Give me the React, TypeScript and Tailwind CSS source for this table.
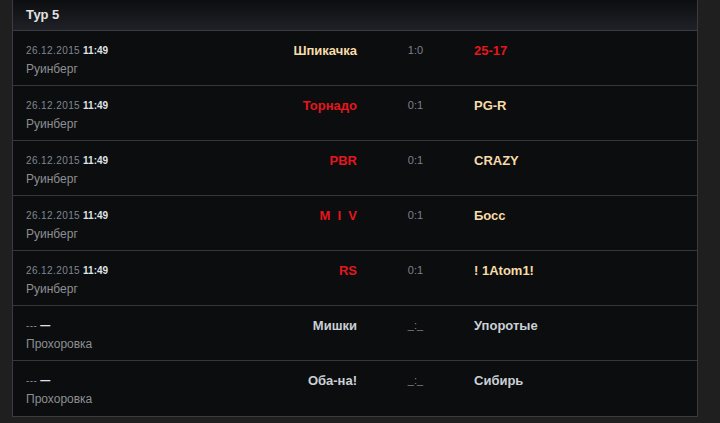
import React from "react";

type Match = {
  date: string;
  time: string;
  place: string;
  home: string;
  homeColor: string;
  score: string;
  away: string;
  awayColor: string;
};

const CREAM = "text-[#f6dca8]";
const RED = "text-[#e5161d]";
const PLAIN = "text-[#c9d0d6]";

const matches: Match[] = [
  { date: "26.12.2015", time: "11:49", place: "Руинберг", home: "Шпикачка", homeColor: CREAM, score: "1:0", away: "25-17", awayColor: RED },
  { date: "26.12.2015", time: "11:49", place: "Руинберг", home: "Торнадо", homeColor: RED, score: "0:1", away: "PG-R", awayColor: CREAM },
  { date: "26.12.2015", time: "11:49", place: "Руинберг", home: "PBR", homeColor: RED, score: "0:1", away: "CRAZY", awayColor: CREAM },
  { date: "26.12.2015", time: "11:49", place: "Руинберг", home: "M  I  V", homeColor: RED, score: "0:1", away: "Босс", awayColor: CREAM },
  { date: "26.12.2015", time: "11:49", place: "Руинберг", home: "RS", homeColor: RED, score: "0:1", away: "! 1Atom1!", awayColor: CREAM },
  { date: "---", time: "—", place: "Прохоровка", home: "Мишки", homeColor: PLAIN, score: "_:_", away: "Упоротые", awayColor: PLAIN },
  { date: "---", time: "—", place: "Прохоровка", home: "Оба-на!", homeColor: PLAIN, score: "_:_", away: "Сибирь", awayColor: PLAIN },
];

export default function App() {
  return (
    <div className="min-h-[423px] bg-[#1f1f20] pl-[12px] pb-[8px] font-['Liberation_Sans',Arial,sans-serif]">
      <div className="w-[686px] border-x border-b border-[#3b3c41] bg-[#0c0d0f]">
        {/* Header */}
        <div className="h-[31px] border-b border-[#393a3f] bg-gradient-to-b from-[#0d0e10] to-[#1f2127] pl-[13px] flex items-center">
          <span className="text-[13px] font-bold text-[#e2e2e2]">Тур 5</span>
        </div>

        {matches.map((m, i) => (
          <div
            key={i}
            className={`h-[55px] grid grid-cols-[200px_131px_117px_1fr] pl-[13px] pt-[12px] ${
              i < matches.length - 1 ? "border-b border-[#36373b]" : ""
            }`}
          >
            <div className="flex flex-col">
              <div className="h-[15px] flex items-center text-[10px] tracking-[0.4px] text-[#7f8791]">
                {m.date}
                <span className="ml-[3px] font-bold text-[#dfe2e6] tracking-normal">{m.time}</span>
              </div>
              <div className="mt-[4px] text-[12px] text-[#8d8f92] leading-[15px]">{m.place}</div>
            </div>
            <div className={`h-[15px] flex items-center justify-end text-[13px] font-bold whitespace-pre ${m.homeColor}`}>
              {m.home}
            </div>
            <div className="h-[15px] flex items-center justify-center text-[11px] text-[#7a828d]">
              {m.score}
            </div>
            <div className={`h-[15px] flex items-center text-[13px] font-bold ${m.awayColor}`}>
              {m.away}
            </div>
          </div>
        ))}
      </div>
    </div>
  );
}
